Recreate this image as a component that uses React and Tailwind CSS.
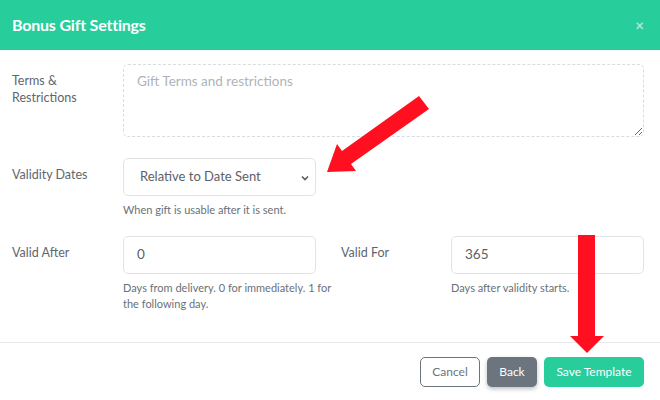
import React from "react";

const font = { fontFamily: "Lato, 'Open Sans', sans-serif" };

const Field = ({ label, children, labelWidth = "w-[111px]" }) => (
  <div className="flex">
    <div className={`${labelWidth} shrink-0 pt-[8px] text-[12.5px] leading-[17px] text-[#5f666d]`}>{label}</div>
    <div className="w-[193px]">{children}</div>
  </div>
);

const Arrows = () => (
  <svg className="absolute inset-0 pointer-events-none" width="660" height="400" viewBox="0 0 660 400">
    <polygon
      points="419,96 429,109 351,164 356,171 327,172 337,144 342,151"
      fill="#ff0f1f"
    />
    <polygon points="578,235 595,235 595,336 604,336 587,353 570,336 578,336" fill="#ff0f1f" />
  </svg>
);

export default function App() {
  return (
    <div className="relative w-[660px] h-[400px] bg-white overflow-hidden" style={font}>
      <div className="h-[50px] bg-[#27cd9b] flex items-center justify-between px-3">
        <h1 className="text-white text-[16px] font-bold tracking-[-0.2px]">Bonus Gift Settings</h1>
        <span className="text-white/60 text-[15px] font-bold mr-[4px]">×</span>
      </div>

      <div className="px-3 pt-[14px] h-[292px]">
        <div className="flex">
          <div className="w-[100px] mr-[11px] pt-[8px] text-[12.5px] leading-[17px] text-[#5f666d]">
            Terms &amp;<br />Restrictions
          </div>
          <textarea
            placeholder="Gift Terms and restrictions"
            className="w-[521px] h-[73px] rounded-[5px] border border-dashed border-[#d9dcdf] px-[13px] py-[6px] text-[13.5px] text-[#495057] placeholder:text-[#aeb4ba] outline-none"
          />
        </div>

        <div className="mt-[21px]">
          <Field label="Validity Dates">
            <div className="relative w-[193px] h-[38px] rounded-[5px] border border-[#e1e4e7] flex items-center pl-[16px] text-[13px] text-[#5a6168]">
              Relative to Date Sent
              <svg className="absolute right-[6px] top-[16px]" width="8" height="6" viewBox="0 0 8 6">
                <path d="M1 1.5 L4 4.5 L7 1.5" stroke="#555c63" strokeWidth="1.6" fill="none" />
              </svg>
            </div>
            <p className="mt-[6px] w-[220px] text-[11px] text-[#6a7178]">When gift is usable after it is sent.</p>
          </Field>
        </div>

        <div className="mt-[17px] flex">
          <Field label="Valid After">
            <div className="w-[193px] h-[38px] rounded-[5px] border border-[#e1e4e7] flex items-center pl-[13px] text-[13.5px] text-[#5a6168]">
              0
            </div>
            <p className="mt-[6px] w-[215px] text-[11px] leading-[16px] text-[#6a7178]">
              Days from delivery. 0 for immediately. 1 for the following day.
            </p>
          </Field>
          <div className="ml-[25px]">
            <Field label="Valid For" labelWidth="w-[110px]">
              <div className="w-[193px] h-[38px] rounded-[5px] border border-[#e1e4e7] flex items-center pl-[13px] text-[13.5px] text-[#5a6168]">
                365
              </div>
              <p className="mt-[6px] text-[11px] leading-[16px] text-[#6a7178]">Days after validity starts.</p>
            </Field>
          </div>
        </div>
      </div>

      <div className="border-t border-[#e6e8ea] flex justify-end gap-[7px] px-[16px] pt-[14px]">
        <button className="w-[60px] h-[30px] rounded-[5px] border border-[#6c757d] text-[12px] text-[#6c757d] bg-white">Cancel</button>
        <button className="w-[50px] h-[30px] rounded-[5px] bg-[#6c757d] text-[12px] text-white shadow-[0_2px_4px_rgba(0,0,0,0.25)]">Back</button>
        <button className="w-[100px] h-[30px] rounded-[5px] bg-[#27cd9b] text-[12px] text-white">Save Template</button>
      </div>

      <Arrows />
    </div>
  );
}
